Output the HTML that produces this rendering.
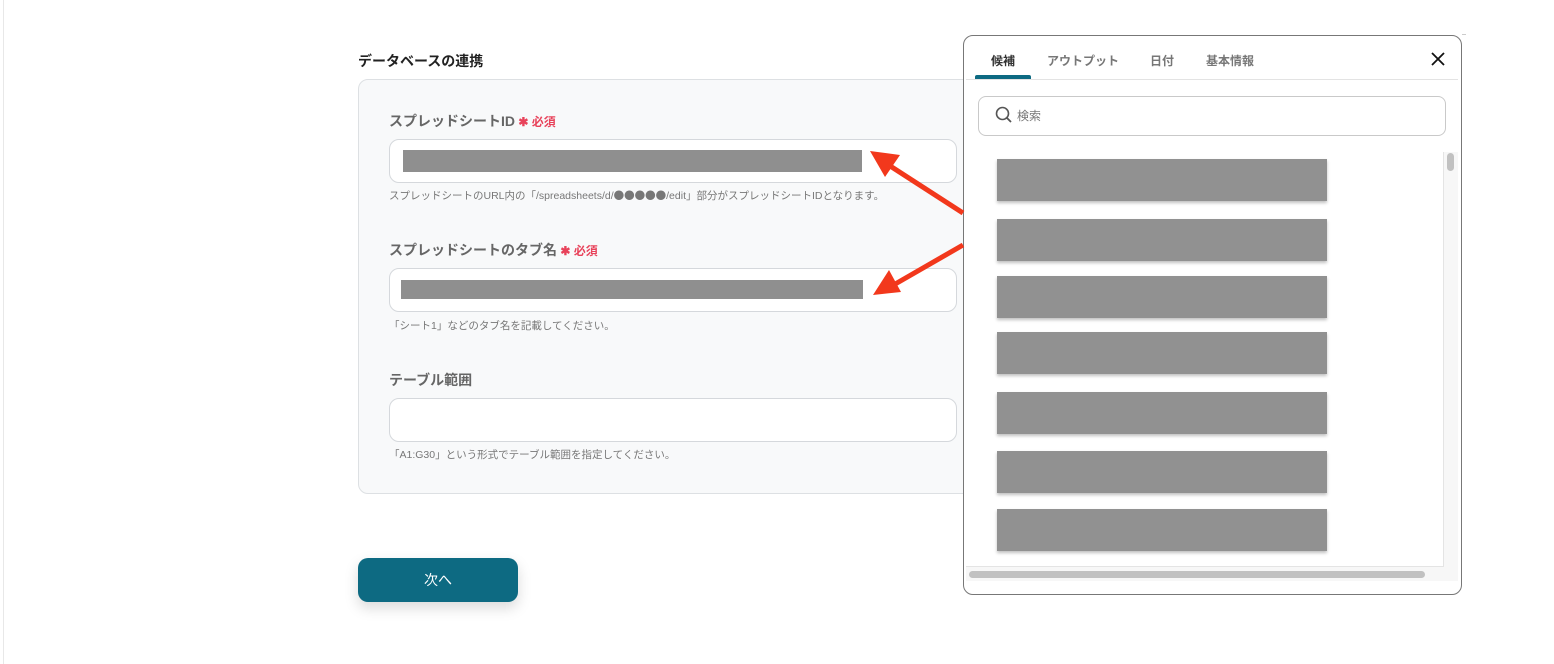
<!DOCTYPE html>
<html><head><meta charset="utf-8"><style>
*{box-sizing:border-box;margin:0;padding:0}
body{width:1554px;height:664px;background:#fff;position:relative;overflow:hidden;font-family:"Liberation Sans","Noto Sans CJK JP",sans-serif;color:#333}
.abs{position:absolute}
.lbl{font-size:14px;font-weight:bold;color:#666}
.req{color:#e8425a;font-size:12px;font-weight:bold}
.inp{position:absolute;left:389px;width:568px;height:44px;background:#fff;border:1px solid #d5d8dc;border-radius:10px}
.help{font-size:10.5px;color:#777;position:absolute;left:389px;white-space:nowrap}
.bar{position:absolute;background:#8f8f8f}
.it{position:absolute;left:997px;width:330px;height:42px;background:#919191;box-shadow:0 2px 3px rgba(0,0,0,.25)}
.tab{position:absolute;top:52px;font-size:12px;font-weight:bold;color:#777}
.cj{font-family:"Noto Sans CJK JP",sans-serif}
</style></head><body>
<div class="abs" style="left:3px;top:0;width:1px;height:664px;background:#e8e8e8"></div>
<div class="abs" style="left:358px;top:51px;font-size:14px;font-weight:bold;color:#222">データベースの連携</div>
<div class="abs" style="left:358px;top:79px;width:640px;height:415px;background:#f8f9fa;border:1px solid #dde0e3;border-radius:10px"></div>
<div class="abs lbl" style="left:389px;top:111px">スプレッドシートID<span class="req"> ✱ 必須</span></div>
<div class="inp" style="top:139px"></div>
<div class="bar" style="left:403px;top:150px;width:459px;height:22px"></div>
<div class="help" style="top:188px">スプレッドシートのURL内の「/spreadsheets/d/<span class="cj">●●●●●</span>/edit」部分がスプレッドシートIDとなります。</div>
<div class="abs lbl" style="left:389px;top:240px">スプレッドシートのタブ名<span class="req"> ✱ 必須</span></div>
<div class="inp" style="top:268px"></div>
<div class="bar" style="left:401px;top:280px;width:462px;height:19px"></div>
<div class="help" style="top:318px">「シート1」などのタブ名を記載してください。</div>
<div class="abs lbl" style="left:389px;top:370px">テーブル範囲</div>
<div class="inp" style="top:398px"></div>
<div class="help" style="top:447px">「A1:G30」という形式でテーブル範囲を指定してください。</div>
<div class="abs" style="left:358px;top:558px;width:160px;height:44px;background:#0d6a82;border-radius:10px;box-shadow:0 6px 14px rgba(0,0,0,.15);color:#fff;font-size:14px;text-align:center;line-height:44px">次へ</div>

<div class="abs" style="left:1462px;top:34px;width:4px;height:1px;background:#ccc"></div>

<!-- panel -->
<div class="abs" style="left:963px;top:35px;width:499px;height:560px;background:#fff;border:1px solid #777;border-radius:10px"></div>
<div class="tab" style="left:991px;color:#333">候補</div>
<div class="tab" style="left:1047px">アウトプット</div>
<div class="tab" style="left:1150px">日付</div>
<div class="tab" style="left:1206px">基本情報</div>
<div class="abs" style="left:975px;top:75px;width:56px;height:4px;background:#0d6a82;border-radius:2px 2px 0 0"></div>
<div class="abs" style="left:966px;top:79px;width:492px;height:1px;background:#e3e3e3"></div>
<svg class="abs" style="left:1430px;top:51px" width="16" height="16"><path d="M2 2L14 14M14 2L2 14" stroke="#111" stroke-width="1.8"/></svg>
<div class="abs" style="left:978px;top:96px;width:468px;height:40px;border:1px solid #c9c9c9;border-radius:8px"></div>
<svg class="abs" style="left:995px;top:106px" width="18" height="18"><circle cx="7.5" cy="7.5" r="6" fill="none" stroke="#555" stroke-width="1.6"/><path d="M12 12L16 16" stroke="#555" stroke-width="1.8"/></svg>
<div class="abs" style="left:1017px;top:107px;font-size:12px;color:#777">検索</div>
<div class="abs" style="left:966px;top:152px;width:478px;height:415px;border-right:1px solid #e4e4e4;border-bottom:1px solid #e4e4e4"></div>
<div class="abs" style="left:1444px;top:152px;width:14px;height:415px;background:#f7f7f7"></div>
<div class="abs" style="left:1447px;top:153px;width:7px;height:18px;background:#c1c1c1;border-radius:4px"></div>
<div class="abs" style="left:966px;top:567px;width:492px;height:14px;background:#f7f7f7"></div>
<div class="abs" style="left:969px;top:571px;width:456px;height:7px;background:#c1c1c1;border-radius:4px"></div>
<div class="it" style="top:159px"></div>
<div class="it" style="top:219px"></div>
<div class="it" style="top:276px"></div>
<div class="it" style="top:332px"></div>
<div class="it" style="top:392px"></div>
<div class="it" style="top:451px"></div>
<div class="it" style="top:509px"></div>

<!-- arrows -->
<svg class="abs" style="left:860px;top:140px" width="110" height="170">
<path d="M103 73L24 22" stroke="#f2381c" stroke-width="5"/>
<path d="M10 11L40 15L25 37Z" fill="#f2381c"/>
<path d="M103 105L30 147" stroke="#f2381c" stroke-width="5"/>
<path d="M13 155L29 130L41 152Z" fill="#f2381c"/>
</svg>
</body></html>
